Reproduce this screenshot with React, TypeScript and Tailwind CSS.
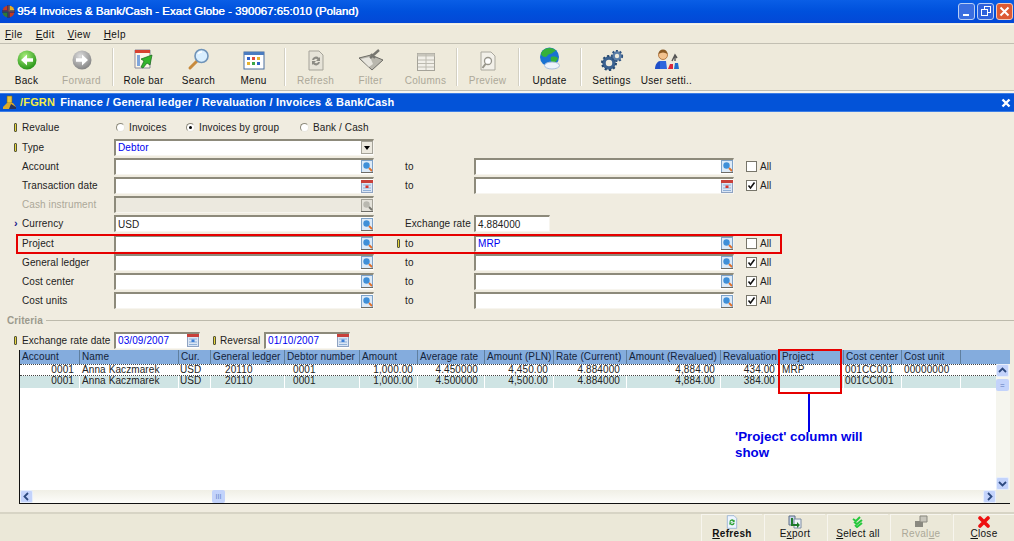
import type { ReactNode } from "react";

const font = "font-['Liberation_Sans',Arial,sans-serif]";

const Back = ({ gray }: { gray?: boolean }) => (
  <svg width="22" height="22" viewBox="0 0 22 22">
    <defs>
      <radialGradient id="gb" cx="40%" cy="30%" r="75%">
        <stop offset="0" stopColor="#a8ee7a" />
        <stop offset="1" stopColor="#1f8f12" />
      </radialGradient>
      <radialGradient id="gg" cx="40%" cy="30%" r="75%">
        <stop offset="0" stopColor="#dddddd" />
        <stop offset="1" stopColor="#7f7f7f" />
      </radialGradient>
    </defs>
    <circle cx="11" cy="11" r="9.5" fill={gray ? "url(#gg)" : "url(#gb)"} />
    <path d={gray ? "M5 9.3h6V5.5l6 5.5-6 5.5v-3.8H5z" : "M17 9.3h-6V5.5L5 11l6 5.5v-3.8h6z"} fill="#fff" />
  </svg>
);

const RoleBar = () => (
  <svg width="24" height="24" viewBox="0 0 24 24">
    <path d="M3 3h15v18H3z" fill="#fdf6e8" stroke="#8a8a9a" />
    <path d="M3 3h15v3H3z" fill="#d8412f" />
    <path d="M5 8h3v11H5z" fill="#7fa6dc" />
    <path d="M9 20l3-6-3-2 11-4-2 10-3-2-4 5z" fill="#35b52b" stroke="#14641a" strokeWidth=".7" />
  </svg>
);

const Search = () => (
  <svg width="24" height="24" viewBox="0 0 24 24">
    <path d="M10 14l-7 7" stroke="#c78a3c" strokeWidth="3" strokeLinecap="round" />
    <circle cx="14.5" cy="9" r="6.5" fill="#d9efff" stroke="#6f93b8" strokeWidth="1.6" />
    <path d="M11 7a4 4 0 0 1 4-2" stroke="#fff" strokeWidth="1.4" fill="none" />
  </svg>
);

const MenuIcon = () => (
  <svg width="22" height="20" viewBox="0 0 22 20">
    <rect x="1" y="1" width="20" height="17" fill="#fff" stroke="#4b6f9e" />
    <path d="M1 1h20v3H1z" fill="#4a7cc0" />
    <path d="M4 6h3v3H4z" fill="#2f62c8" />
    <path d="M9 6h3v3H9z" fill="#e04a3a" />
    <path d="M14 6h3v3h-3z" fill="#e8b32c" />
    <path d="M4 11h3v3H4z" fill="#e8b32c" />
    <path d="M9 11h3v3H9z" fill="#3aa648" />
    <path d="M14 11h3v3h-3z" fill="#2f62c8" />
  </svg>
);

const RefreshDoc = ({ small }: { small?: boolean }) => (
  <svg width={small ? 12 : 18} height={small ? 14 : 21} viewBox="0 0 18 21">
    <path d="M2 1h10l4 4v15H2z" fill={small ? "#eef5ff" : "#e6e3d8"} stroke={small ? "#7fa0cf" : "#a5a399"} />
    <path
      d="M5 10a4 4 0 0 1 7-2l1-1v4H9l1.5-1.5A2 2 0 0 0 7 10zM13 12a4 4 0 0 1-7 2l-1 1v-4h4l-1.5 1.5A2 2 0 0 0 11 12z"
      fill={small ? "#2fa236" : "#8c8b84"}
    />
  </svg>
);

const Filter = () => (
  <svg width="26" height="22" viewBox="0 0 26 22">
    <path d="M1 9l12-3 12 5-11 10z" fill="#b9b7ad" stroke="#6d6c66" />
    <path d="M3 10l9-2 3 7-4 3z" fill="#e8e6de" />
    <path d="M12 9l9-8M13 5l4 4" stroke="#77766f" strokeWidth="2.4" />
  </svg>
);

const Columns = () => (
  <svg width="18" height="18" viewBox="0 0 18 18">
    <rect x=".5" y=".5" width="17" height="17" fill="#f1efe8" stroke="#a5a399" />
    <path d="M.5.5h17v3H.5z" fill="#c8c6bc" />
    <path d="M9 1v16M1 7h16M1 10.5h16M1 14h16" stroke="#bcbab0" />
  </svg>
);

const Preview = () => (
  <svg width="16" height="20" viewBox="0 0 16 20">
    <path d="M1 1h10l4 4v14H1z" fill="#f2f0e9" stroke="#aaa89e" />
    <circle cx="8" cy="10" r="3.5" fill="#fff" stroke="#97958b" strokeWidth="1.3" />
    <path d="M5.5 13L2.5 17" stroke="#97958b" strokeWidth="2" />
  </svg>
);

const Globe = () => (
  <svg width="22" height="24" viewBox="0 0 22 24">
    <circle cx="10.5" cy="10" r="9.5" fill="#1a72d2" />
    <path d="M6 2c4-2 9-1 11 2-3 0-3 3-6 3S9 10 6 10 2 7 2 7c0-2 2-4 4-5zM12 10c3-1 6 0 7 1-1 3-3 5-5 6-2-2-3-5-2-7z" fill="#35b13a" />
    <ellipse cx="13" cy="18.5" rx="7.5" ry="3.5" fill="#eef3fb" stroke="#a9bedd" />
  </svg>
);

const Gears = () => (
  <svg width="24" height="22" viewBox="0 0 24 22">
    <circle cx="9" cy="14" r="5" fill="none" stroke="#3b6290" strokeWidth="3.5" />
    <circle cx="9" cy="14" r="7" fill="none" stroke="#24486f" strokeWidth="2" strokeDasharray="2.2 2.2" />
    <circle cx="17" cy="7" r="3.5" fill="none" stroke="#5c7fa8" strokeWidth="2.6" />
    <circle cx="17" cy="7" r="5.2" fill="none" stroke="#2e5280" strokeWidth="1.8" strokeDasharray="2 1.8" />
  </svg>
);

const Users = () => (
  <svg width="26" height="22" viewBox="0 0 26 22">
    <circle cx="9" cy="6" r="4.5" fill="#f2c28e" stroke="#a8682e" strokeWidth=".8" />
    <path d="M4.5 5a4.5 4.5 0 0 1 9 0c-3-2-6-2-9 0z" fill="#8a5a24" />
    <path d="M1 20c0-5 3-8 5-8v8z" fill="#1f4fc8" />
    <path d="M6 12h6l1 8H6z" fill="#2c66dd" />
    <path d="M14 20h5v-5h-3z" fill="#d9263a" />
    <path d="M20 20h5l-1-6h-3z" fill="#1f6ccc" />
    <path d="M18 12l3-6 2 3M21 6v6" stroke="#555" strokeWidth="1.4" fill="none" />
  </svg>
);

const Lookup = ({ off }: { off?: boolean }) => (
  <svg width="12" height="13" viewBox="0 0 12 13" className="shrink-0">
    <rect x=".5" y=".5" width="11" height="12" fill={off ? "#e4e2da" : "#dceaf8"} stroke={off ? "#a5a399" : "#7da2c9"} />
    <circle cx="5.5" cy="5.5" r="3.2" fill={off ? "#b9b8b0" : "#3f8fd8"} />
    <path d="M8 8l3 3" stroke={off ? "#77766f" : "#e0702a"} strokeWidth="1.8" />
    <path d="M0 12.5h12" stroke="#6d6c66" />
  </svg>
);

const Cal = ({ blue }: { blue?: boolean }) => (
  <svg width="12" height="13" viewBox="0 0 12 13" className="shrink-0">
    <rect x=".5" y=".5" width="11" height="12" fill="#dbe6f5" stroke="#8fa3c2" />
    <path d="M0 0h12v3H0z" fill="#c8403a" />
    <path d="M2 5h8M2 8h8M2 10.5h8" stroke="#8fb0d8" />
    <path d="M4.5 5.5h3V8h-3z" fill={blue ? "#3f7fd8" : "#d8362e"} />
  </svg>
);

const ReqMark = () => <span className="block w-[3px] h-[9px] bg-[#e8d53a] border border-[#55553a] rounded-[1px]" />;

const Field = ({ w, value, icon, blue, off }: { w: string; value?: string; icon?: ReactNode; blue?: boolean; off?: boolean }) => (
  <div
    className={`${w} h-[17px] flex items-center justify-between pl-[2px] pr-0 border-t-2 border-l-2 border-t-[#8d8a7b] border-l-[#8d8a7b] border-b border-r border-b-[#f7f5ef] border-r-[#f7f5ef] ${
      off ? "bg-[#ece9df]" : "bg-white"
    }`}
  >
    <span className={blue ? "text-[#0000f0]" : "text-[#222]"}>{value}</span>
    {icon}
  </div>
);

const Check = ({ on }: { on?: boolean }) => (
  <span className="w-[11px] h-[11px] border border-[#77756a] bg-white flex items-center justify-center">
    {on && (
      <svg width="9" height="9" viewBox="0 0 9 9">
        <path d="M1.5 4.5l2 2.5 4-5.5" stroke="#111" strokeWidth="1.6" fill="none" />
      </svg>
    )}
  </span>
);

const Row = ({
  mark,
  label,
  off,
  value,
  blue,
  icon,
  children,
}: {
  mark?: "req" | "arrow";
  label: string;
  off?: boolean;
  value?: string;
  blue?: boolean;
  icon?: ReactNode;
  children?: ReactNode;
}) => (
  <div className="h-[19.2px] flex items-center">
    <span className="w-[22px] pl-[14px] shrink-0">
      {mark === "req" && <ReqMark />}
      {mark === "arrow" && <span className="block text-[#1a1a8c] font-bold text-[11px] leading-[9px]">›</span>}
    </span>
    <span className={`w-[92px] shrink-0 ${off ? "text-[#aca899]" : ""}`}>{label}</span>
    <Field w="w-[260px]" value={value} blue={blue} icon={icon} off={off} />
    {children}
  </div>
);

const ToField = ({ value, blue, all, icon, mark }: { value?: string; blue?: boolean; all?: boolean; icon: ReactNode; mark?: boolean }) => (
  <>
    <span className="w-[31px] shrink-0 flex justify-end pr-[5px]">{mark && <ReqMark />}</span>
    <span className="w-[69px] shrink-0">to</span>
    <Field w="w-[260px]" value={value} blue={blue} icon={icon} />
    <span className="ml-[12px] mr-[3px]">
      <Check on={all} />
    </span>
    <span>All</span>
  </>
);

const Radio = ({ on, label, w }: { on?: boolean; label: string; w: string }) => (
  <span className={`${w} flex items-center gap-[4px]`}>
    <span className="w-[9px] h-[9px] rounded-full border border-[#8d8a7b] border-r-[#e8e6dc] border-b-[#e8e6dc] bg-white flex items-center justify-center">
      {on && <span className="w-[3px] h-[3px] rounded-full bg-black" />}
    </span>
    {label}
  </span>
);

const ToolBtn = ({ icon, label, off }: { icon: ReactNode; label: string; off?: boolean }) => (
  <div className={`w-[55px] h-[46px] flex flex-col items-center shrink-0 ${off ? "text-[#aca899]" : "text-[#111]"}`}>
    <div className="h-[30px] flex items-end pb-[3px]">{icon}</div>
    <span className="leading-[14px] whitespace-nowrap tracking-[0.3px]">{label}</span>
  </div>
);

const Sep = () => (
  <div className="w-[7px] flex justify-center shrink-0">
    <div className="w-[2px] h-[38px] mt-[4px] bg-[#d3d0c3] border-r border-white" />
  </div>
);

const FootBtn = ({ icon, children, off }: { icon: ReactNode; children: ReactNode; off?: boolean }) => (
  <div className={`w-[61px] flex flex-col items-center border-l border-t border-[#f7f5ee] ${off ? "text-[#aca899]" : "text-[#111]"}`}>
    <div className="h-[13px] flex items-center">{icon}</div>
    <span className="leading-[12px] whitespace-nowrap tracking-[0.3px]">{children}</span>
  </div>
);

const gridCols = "grid grid-cols-[59px_99px_32px_74px_75px_58px_67px_69px_73px_94px_59px_64px_58px_59px_1fr]";
const heads = [
  "Account",
  "Name",
  "Cur.",
  "General ledger",
  "Debtor number",
  "Amount",
  "Average rate",
  "Amount (PLN)",
  "Rate (Current)",
  "Amount (Revalued)",
  "Revaluation",
  "Project",
  "Cost center",
  "Cost unit",
  "",
];

const rows = [
  ["0001", "Anna Kaczmarek", "USD", "20110", "0001", "1,000.00", "4.450000", "4,450.00", "4.884000", "4,884.00", "434.00", "MRP", "001CC001", "00000000", ""],
  ["0001", "Anna Kaczmarek", "USD", "20110", "0001", "1,000.00", "4.500000", "4,500.00", "4.884000", "4,884.00", "384.00", "", "001CC001", "", ""],
];
const aligns = [
  "text-right pr-[5px]",
  "pl-[2px]",
  "pl-[1px]",
  "pl-[14px]",
  "pl-[8px]",
  "text-right pr-[4px]",
  "text-right pr-[6px]",
  "text-right pr-[5px]",
  "text-right pr-[6px]",
  "text-right pr-[5px]",
  "text-right pr-[4px]",
  "pl-[2px]",
  "pl-[1px]",
  "pl-[2px]",
  "",
];

const ScrollBtn = ({ d }: { d: string }) => (
  <div className="w-[13px] h-[13px] bg-[#c3d3fb] rounded-[2px] border border-[#e6eefc] flex items-center justify-center shrink-0">
    <svg width="9" height="9" viewBox="0 0 9 9">
      <path d={d} stroke="#2d4a80" strokeWidth="1.8" fill="none" />
    </svg>
  </div>
);

export default function App() {
  return (
    <div className={`${font} relative w-[1014px] h-[541px] overflow-hidden flex flex-col bg-[#f0ece0] text-[10px] leading-[13px] text-[#222] tracking-[0.1px]`}>
      <div className="h-[23px] shrink-0 flex items-center bg-gradient-to-b from-[#0a5ee6] via-[#0050dc] to-[#0348d6] text-white pl-[2px] pr-[1px]">
        <svg width="13" height="13" viewBox="0 0 13 13" className="mr-[2px]">
          <circle cx="6.5" cy="6.5" r="6" fill="#c23b22" />
          <path d="M6.5.5a6 6 0 0 1 6 6h-6z" fill="#e2b32a" />
          <path d="M.5 6.5h6v6a6 6 0 0 1-6-6z" fill="#2c7a3a" />
          <path d="M5 0h3v13H5zM0 5h13v3H0z" fill="#1c2a70" opacity=".6" />
        </svg>
        <span className="text-[11.5px] tracking-normal whitespace-nowrap [text-shadow:0.4px_0_0_#fff]">954 Invoices &amp; Bank/Cash - Exact Globe - 390067:65:010 (Poland)</span>
        <div className="ml-auto flex gap-[2px]">
          <span className="w-[17px] h-[17px] rounded-[3px] border border-[#b8cdf4] bg-[#3b6ee0] flex items-end pl-[4px] pb-[3px]">
            <span className="w-[6px] h-[2px] bg-white" />
          </span>
          <span className="w-[17px] h-[17px] rounded-[3px] border border-[#b8cdf4] bg-[#2f62dc] relative">
            <span className="absolute left-[6px] top-[2px] w-[7px] h-[7px] border border-white" />
            <span className="absolute left-[3px] top-[5px] w-[7px] h-[7px] border border-white bg-[#2f62dc]" />
          </span>
          <span className="w-[17px] h-[17px] rounded-[3px] border border-[#f0c8b8] bg-[#dd5a34] flex items-center justify-center">
            <svg width="11" height="11" viewBox="0 0 11 11">
              <path d="M1.5 1.5l8 8M9.5 1.5l-8 8" stroke="#fff" strokeWidth="2" />
            </svg>
          </span>
        </div>
      </div>

      <div className="h-[20px] shrink-0 mt-px flex items-center gap-[13px] pl-[5px] bg-[#eeeadb] border-t border-t-[#f8f6ee] border-b border-b-[#c2bfb2] text-[#111] tracking-[0.4px]">
        <span><u>F</u>ile</span>
        <span><u>E</u>dit</span>
        <span><u>V</u>iew</span>
        <span><u>H</u>elp</span>
      </div>

      <div className="h-[46px] shrink-0 flex -ml-px bg-[#eeeadb]">
        <ToolBtn icon={<Back />} label="Back" />
        <ToolBtn icon={<Back gray />} label="Forward" off />
        <Sep />
        <ToolBtn icon={<RoleBar />} label="Role bar" />
        <ToolBtn icon={<Search />} label="Search" />
        <ToolBtn icon={<MenuIcon />} label="Menu" />
        <Sep />
        <ToolBtn icon={<RefreshDoc />} label="Refresh" off />
        <ToolBtn icon={<Filter />} label="Filter" off />
        <ToolBtn icon={<Columns />} label="Columns" off />
        <Sep />
        <ToolBtn icon={<Preview />} label="Preview" off />
        <Sep />
        <ToolBtn icon={<Globe />} label="Update" />
        <Sep />
        <ToolBtn icon={<Gears />} label="Settings" />
        <ToolBtn icon={<Users />} label="User setti.." />
      </div>

      <div className="h-[3px] shrink-0 bg-[#f7f5ee] border-t border-[#c2bfb2]" />

      <div className="h-[19px] shrink-0 flex items-center bg-[#0353d8] border-y border-[#3d7ee6] pl-[2px] pr-[3px] text-[11px] font-bold tracking-[0.18px] text-white">
        <svg width="15" height="15" viewBox="0 0 15 15" className="mr-[3px]">
          <path d="M5 1h5v7H5z" fill="#e8c43c" stroke="#7d6418" strokeWidth=".6" />
          <path d="M1 12l4-4h6l3 4v2H1z" fill="#d9a92a" />
          <path d="M9 9l5 3v2H7z" fill="#27335c" />
        </svg>
        <span className="text-[#f5ec4a] mr-[5px]">/FGRN</span>
        <span className="whitespace-nowrap">Finance / General ledger / Revaluation / Invoices &amp; Bank/Cash</span>
        <svg width="10" height="10" viewBox="0 0 10 10" className="ml-auto">
          <path d="M1.5 1.5l7 7M8.5 1.5l-7 7" stroke="#fff" strokeWidth="2.4" />
        </svg>
      </div>

      <div className="flex-1 flex flex-col pt-[6.4px] min-h-0">
        <div className="h-[19.2px] flex items-center">
          <span className="w-[22px] pl-[14px] shrink-0">
            <ReqMark />
          </span>
          <span className="w-[94px] shrink-0">Revalue</span>
          <Radio label="Invoices" w="w-[70px]" />
          <Radio on label="Invoices by group" w="w-[114px]" />
          <Radio label="Bank / Cash" w="w-[80px]" />
        </div>
        <Row
          mark="req"
          label="Type"
          value="Debtor"
          blue
          icon={
            <span className="w-[12px] h-[13px] bg-[#ece9df] border border-[#a5a399] flex items-center justify-center">
              <span className="border-x-[3px] border-x-transparent border-t-[4px] border-t-black" />
            </span>
          }
        />
        <Row label="Account" icon={<Lookup />}>
          <ToField icon={<Lookup />} />
        </Row>
        <Row label="Transaction date" icon={<Cal />}>
          <ToField icon={<Cal />} all />
        </Row>
        <Row label="Cash instrument" off icon={<Lookup off />} />
        <Row mark="arrow" label="Currency" value="USD" icon={<Lookup />}>
          <span className="w-[31px] shrink-0" />
          <span className="w-[69px] shrink-0 whitespace-nowrap">Exchange rate</span>
          <Field w="w-[76px]" value="4.884000" />
        </Row>
        <Row label="Project" icon={<Lookup />}>
          <ToField icon={<Lookup />} value="MRP" blue mark />
        </Row>
        <Row label="General ledger" icon={<Lookup />}>
          <ToField icon={<Lookup />} all />
        </Row>
        <Row label="Cost center" icon={<Lookup />}>
          <ToField icon={<Lookup />} all />
        </Row>
        <Row label="Cost units" icon={<Lookup />}>
          <ToField icon={<Lookup />} all />
        </Row>

        <div className="h-[20px] flex items-center gap-[3px] pl-[7px] shrink-0">
          <span className="font-bold text-[#9c9a8d]">Criteria</span>
          <span className="flex-1 h-px bg-[#bdbaac]" />
        </div>

        <div className="h-[20px] flex items-center shrink-0">
          <span className="w-[22px] pl-[14px] shrink-0">
            <ReqMark />
          </span>
          <span className="w-[92px] shrink-0 whitespace-nowrap">Exchange rate date</span>
          <Field w="w-[86px]" value="03/09/2007" blue icon={<Cal blue />} />
          <span className="ml-[13px] mr-[4px]">
            <ReqMark />
          </span>
          <span className="w-[44px]">Reversal</span>
          <Field w="w-[86px]" value="01/10/2007" blue icon={<Cal blue />} />
        </div>

        <div className="ml-[19px] mr-[4px] h-[154px] flex flex-col relative bg-white border-l border-b border-[#111] shrink-0">
          <div className={`${gridCols} bg-[#84acdd] h-[14px] shrink-0`}>
            {heads.map((h, i) => (
              <span key={i} className="pl-[2px] border-l border-[#5f7f9f] first:border-l-0 whitespace-nowrap overflow-hidden text-[#14233a]">
                {h}
              </span>
            ))}
          </div>
          {rows.map((r, ri) => (
            <div
              key={ri}
              className={`${gridCols} shrink-0 mr-[14px] h-[12px] ${ri === 0 ? "bg-white border-y border-dotted border-[#444]" : "bg-[#cfe4e4]"}`}
            >
              {r.map((c, i) => (
                <span key={i} className={`${aligns[i]} leading-[10px] whitespace-nowrap border-l border-white first:border-l-0 text-[#222]`}>
                  {c}
                </span>
              ))}
            </div>
          ))}
          <div className="absolute right-0 top-[14px] bottom-0 w-[14px] flex flex-col bg-[#f5f5ee]">
            <ScrollBtn d="M1 6l3.5-3.5L8 6" />
            <div className="w-[13px] h-[12px] mt-[2px] bg-[#c3d3fb] rounded-[2px] flex items-center justify-center text-[8px] text-[#5a78b8]">=</div>
            <div className="flex-1" />
            <ScrollBtn d="M1 3l3.5 3.5L8 3" />
            <div className="h-[13px] bg-[#ecebdf]" />
          </div>
          <div className="absolute left-0 right-[14px] bottom-0 h-[13px] flex bg-gradient-to-b from-[#f0efe6] to-[#fdfdfa]">
            <ScrollBtn d="M6 1L2.5 4.5 6 8" />
            <div className="ml-[179px] w-[13px] h-[13px] bg-[#c3d3fb] rounded-[2px] flex items-center justify-center text-[7px] text-[#6a88c8]">III</div>
            <div className="flex-1" />
            <ScrollBtn d="M3 1l3.5 3.5L3 8" />
          </div>
        </div>
      </div>

      <div className="h-[29px] shrink-0 flex justify-end gap-[2px] bg-[#ebe8d8] border-t-2 border-[#d7d4c5]">
        <FootBtn icon={<RefreshDoc small />}>
          <span className="font-bold"><u>R</u>efresh</span>
        </FootBtn>
        <FootBtn
          icon={
            <svg width="14" height="14" viewBox="0 0 14 14">
              <path d="M1 1h6v9H1z" fill="#c8d4e8" stroke="#5a6c88" />
              <path d="M6 4h7v9H6z" fill="#eef2f8" stroke="#7d8ca4" />
              <path d="M5 3v6h4V7l3 3-3 3v-2H3V3z" fill="#1e7a2a" />
            </svg>
          }
        >
          E<u>x</u>port
        </FootBtn>
        <FootBtn
          icon={
            <svg width="12" height="12" viewBox="0 0 12 12">
              <path d="M1 3l3 2 4-4M2 6l3 2 5-4M3 9l2 2 5-4" stroke="#25c83c" strokeWidth="2" fill="none" />
            </svg>
          }
        >
          <u>S</u>elect all
        </FootBtn>
        <FootBtn
          off
          icon={
            <svg width="14" height="13" viewBox="0 0 14 13">
              <path d="M1 6h8v6H1z" fill="#8a8980" />
              <path d="M6 1h7v6H6z" fill="#c8c6bc" stroke="#8a8980" />
            </svg>
          }
        >
          Reval<u>u</u>e
        </FootBtn>
        <FootBtn
          icon={
            <svg width="12" height="12" viewBox="0 0 12 12">
              <path d="M2 2l8 8M10 2l-8 8" stroke="#ee1010" strokeWidth="3.6" strokeLinecap="round" />
            </svg>
          }
        >
          <u>C</u>lose
        </FootBtn>
      </div>

      <div className="absolute left-[16px] top-[234px] w-[766px] h-[20px] border-2 border-[#e60000]" />
      <div className="absolute left-[778px] top-[349px] w-[64px] h-[45px] border-2 border-[#e60000]" />
      <div className="absolute left-[808px] top-[394px] w-[2px] h-[38px] bg-[#0000e6]" />
      <div className="absolute left-[735px] top-[429px] w-[140px] text-[13.3px] leading-[16px] font-bold tracking-normal text-[#0000e6]">
        'Project' column will show
      </div>
    </div>
  );
}
